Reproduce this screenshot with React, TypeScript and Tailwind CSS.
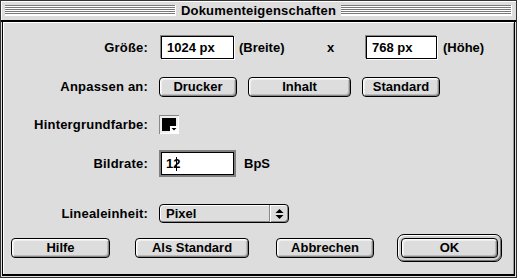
import React from "react";

const stripes =
  "h-[11px] flex-1 bg-[repeating-linear-gradient(to_bottom,#7a7a7a_0px,#7a7a7a_1px,#ffffff_1px,#ffffff_2px)] border-r border-b border-white";

const Btn = ({ w, children }: { w: string; children: React.ReactNode }) => (
  <div
    className={`${w} h-[20px] shrink-0 rounded-[4px] border border-black bg-[#dddddd] shadow-[inset_1px_1px_0_#fff,inset_2px_2px_0_#eee,inset_-1px_-1px_0_#888,inset_-2px_-2px_0_#bbb] flex items-center justify-center text-[13px] font-bold`}
  >
    {children}
  </div>
);

const Field = ({ w, children }: { w: string; children: React.ReactNode }) => (
  <div
    className={`${w} h-[23px] shrink-0 border border-black bg-white shadow-[-1px_-1px_0_#888,1px_1px_0_#fff] flex items-center pl-[5px] text-[13px] font-bold`}
  >
    {children}
  </div>
);

const Label = ({ children }: { children: React.ReactNode }) => (
  <div className="w-[145px] shrink-0 text-right text-[13px] font-bold tracking-[0.2px]">{children}</div>
);

const Swatch = () => (
  <svg width="20" height="19" viewBox="0 0 20 19">
    <rect x="0" y="0" width="20" height="19" fill="#888" />
    <rect x="1" y="1" width="19" height="18" fill="#fff" />
    <rect x="1" y="1" width="18" height="17" fill="#eee" />
    <rect x="3" y="3" width="14" height="13" fill="#000" />
    <rect x="11" y="11" width="8" height="7" fill="#fff" />
    <path d="M12.5 13 L17.5 13 L15 15.5 Z" fill="#000" />
  </svg>
);

const UpDown = () => (
  <svg width="9" height="12" viewBox="0 0 9 12">
    <path d="M4.5 1 L8.5 5 L0.5 5 Z" fill="#000" />
    <path d="M0.5 7 L8.5 7 L4.5 11 Z" fill="#000" />
  </svg>
);

export default function App() {
  return (
    <div className="w-[517px] h-[278px] bg-[#dddddd] border border-[#333] flex flex-col font-['Liberation_Sans',Arial,sans-serif] text-black overflow-hidden">
      {/* title bar */}
      <div className="h-[19px] shrink-0 flex items-center px-[4px] shadow-[inset_1px_1px_0_#fff]">
        <div className={stripes} />
        <div className="px-[5px] text-[13px] font-bold leading-none tracking-[0.2px]">Dokumenteigenschaften</div>
        <div className={stripes} />
      </div>
      <div className="h-[2px] shrink-0 bg-black" />

      {/* content */}
      <div className="flex-1 mx-[1px] mb-[1px] border-l border-r border-b-2 border-black bg-[#dddddd] shadow-[inset_1px_1px_0_#fff,inset_-1px_0_0_#999] flex flex-col pt-[14px]">
        {/* Größe */}
        <div className="flex items-center h-[23px]">
          <Label>Größe:</Label>
          <div className="ml-[13px]">
            <Field w="w-[73px]">1024 px</Field>
          </div>
          <span className="ml-[5px] w-[88px] text-[13px] font-bold">(Breite)</span>
          <span className="w-[39px] text-[13px] font-bold">x</span>
          <Field w="w-[71px]">768 px</Field>
          <span className="ml-[6px] text-[13px] font-bold">(Höhe)</span>
        </div>

        {/* Anpassen an */}
        <div className="flex items-center h-[20px] mt-[18px]">
          <Label>Anpassen an:</Label>
          <div className="ml-[11px] flex gap-[11px]">
            <Btn w="w-[78px]">Drucker</Btn>
            <Btn w="w-[103px]">Inhalt</Btn>
            <Btn w="w-[78px]">Standard</Btn>
          </div>
        </div>

        {/* Hintergrundfarbe */}
        <div className="flex items-center h-[19px] mt-[18px]">
          <Label>Hintergrundfarbe:</Label>
          <div className="ml-[11px] flex">
            <Swatch />
          </div>
        </div>

        {/* Bildrate */}
        <div className="flex items-center h-[27px] mt-[16px]">
          <Label>Bildrate:</Label>
          <div className="ml-[11px] w-[77px] h-[27px] bg-[#808080] p-[2px]">
            <div className="w-full h-full border border-black bg-white flex items-center pl-[4px] text-[13px] font-bold">
              12
              <span className="ml-[-4px] w-[1px] h-[14px] bg-black" />
            </div>
          </div>
          <span className="ml-[8px] text-[13px] font-bold">BpS</span>
        </div>

        {/* Linealeinheit */}
        <div className="flex items-center h-[19px] mt-[27px]">
          <Label>Linealeinheit:</Label>
          <div className="ml-[11px] w-[130px] h-[19px] rounded-[4px] border border-black bg-[#dddddd] shadow-[inset_1px_1px_0_#fff,inset_-1px_-1px_0_#888] flex">
            <div className="flex-1 flex items-center pl-[6px] text-[13px] font-bold">Pixel</div>
            <div className="w-[19px] border-l border-[#888] shadow-[inset_1px_0_0_#fff] flex items-center justify-center">
              <UpDown />
            </div>
          </div>
        </div>

        {/* bottom buttons */}
        <div className="flex items-center h-[28px] mt-[11px] pl-[8px]">
          <Btn w="w-[99px]">Hilfe</Btn>
          <div className="ml-[25px]">
            <Btn w="w-[114px]">Als Standard</Btn>
          </div>
          <div className="ml-[27px]">
            <Btn w="w-[98px]">Abbrechen</Btn>
          </div>
          <div className="ml-[23px] w-[105px] h-[28px] rounded-[7px] border border-black bg-[#cfcfcf] shadow-[inset_1px_1px_0_#fff,inset_-1px_-1px_0_#777] p-[3px]">
            <Btn w="w-full">OK</Btn>
          </div>
        </div>
      </div>
    </div>
  );
}
